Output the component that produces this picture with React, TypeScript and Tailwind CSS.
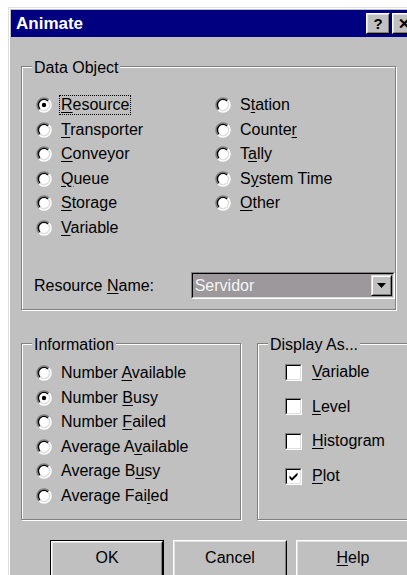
import React from 'react';

const FONT = { fontFamily: '"Liberation Sans", Arial, sans-serif' };

// underline the access-key letter of a label
const Label = ({ text, k }: { text: string; k: number }) => (
  <span>
    {text.slice(0, k)}
    <span className="underline underline-offset-2">{text[k]}</span>
    {text.slice(k + 1)}
  </span>
);

const arc = (r: number, first: boolean) => {
  const d = r * 0.7071;
  const a = [8 - d, 8 + d];
  const b = [8 + d, 8 - d];
  const [p, q] = first ? [a, b] : [b, a];
  return `M ${p[0]} ${p[1]} A ${r} ${r} 0 0 1 ${q[0]} ${q[1]}`;
};

const RadioMark = ({ checked }: { checked?: boolean }) => (
  <svg width="16" height="16" viewBox="0 0 16 16" className="shrink-0">
    <circle cx="8" cy="8" r="6" fill="#fff" />
    <path d={arc(7, true)} stroke="#808080" strokeWidth="1.6" fill="none" />
    <path d={arc(7, false)} stroke="#fff" strokeWidth="1.6" fill="none" />
    <path d={arc(5.6, true)} stroke="#000" strokeWidth="1.4" fill="none" />
    <path d={arc(5.6, false)} stroke="#dfdfdf" strokeWidth="1.4" fill="none" />
    {checked && <circle cx="8" cy="8" r="2.2" fill="#000" />}
  </svg>
);

const Radio = ({
  text,
  k,
  checked,
  focus,
}: {
  text: string;
  k: number;
  checked?: boolean;
  focus?: boolean;
}) => (
  <div className="flex h-[24.5px] items-center">
    <RadioMark checked={checked} />
    <span
      className={
        'ml-[8px] px-[1px] leading-[18px] ' + (focus ? 'outline outline-1 outline-dotted outline-black' : '')
      }
    >
      <Label text={text} k={k} />
    </span>
  </div>
);

const Check = ({ text, k, checked }: { text: string; k: number; checked?: boolean }) => (
  <div className="flex h-[34.6px] items-center">
    <div className="h-[17px] w-[17px] shrink-0 border border-b-white border-l-[#808080] border-r-white border-t-[#808080]">
      <div className="h-full w-full border border-b-[#dfdfdf] border-l-black border-r-[#dfdfdf] border-t-black bg-white">
        {checked && (
          <svg width="13" height="13" viewBox="0 0 13 13">
            <path d="M2.5 5.5 L5 8 L10.5 2.5 L10.5 5.2 L5 10.7 L2.5 8.2 Z" fill="#000" />
          </svg>
        )}
      </div>
    </div>
    <span className="ml-[10px] leading-[18px]">
      <Label text={text} k={k} />
    </span>
  </div>
);

// etched group frame with a caption sitting on the top line
const Group = ({
  title,
  className,
  children,
}: {
  title: string;
  className: string;
  children: React.ReactNode;
}) => (
  <div
    className={
      'relative border border-[#808080] shadow-[inset_1px_1px_0_#fff,1px_1px_0_#fff] ' + className
    }
  >
    <span className="absolute left-[10px] top-[-9px] bg-[#c0c0c0] px-[2px] leading-[20px]">{title}</span>
    {children}
  </div>
);

const Button = ({ children, isDefault }: { children: React.ReactNode; isDefault?: boolean }) => (
  <div className={'h-[40px] w-[114px] ' + (isDefault ? 'border border-black' : '')}>
    <div className="h-full w-full border border-b-black border-l-white border-r-black border-t-white">
      <div className="flex h-full w-full items-center justify-center border border-b-[#808080] border-l-[#dfdfdf] border-r-[#808080] border-t-[#dfdfdf] pb-[4px]">
        {children}
      </div>
    </div>
  </div>
);

const TitleButton = ({ children }: { children: React.ReactNode }) => (
  <div className="h-[21px] w-[24px] border border-b-black border-l-white border-r-black border-t-white bg-[#c0c0c0]">
    <div className="flex h-full w-full items-center justify-center border border-b-[#808080] border-l-[#dfdfdf] border-r-[#808080] border-t-[#dfdfdf] text-[15px] font-bold leading-none text-black">
      {children}
    </div>
  </div>
);

export default function App() {
  return (
    <div className="h-[575px] w-[407px] overflow-hidden bg-white pl-[8px] pt-[7px] text-[16px] text-black" style={FONT}>
      <div className="w-[420px] border border-b-black border-l-[#dfdfdf] border-r-black border-t-[#dfdfdf]">
        <div className="border border-b-[#808080] border-l-white border-r-[#808080] border-t-white bg-[#c0c0c0] p-[1px] pb-[40px]">
          {/* caption bar */}
          <div className="flex h-[27px] items-center bg-[#000080] pl-[5px] pr-[2px]">
            <span className="flex-1 text-[17px] font-bold text-white">Animate</span>
            <div className="flex gap-[2px] pr-[7px]">
              <TitleButton>?</TitleButton>
              <TitleButton>✕</TitleButton>
            </div>
          </div>

          <div className="pl-[10px]">
            <Group title="Data Object" className="mt-[29px] h-[244px] w-[375px]">
              <div className="flex pl-[14px] pt-[26px]">
                <div className="w-[179px]">
                  <Radio text="Resource" k={0} checked focus />
                  <Radio text="Transporter" k={0} />
                  <Radio text="Conveyor" k={0} />
                  <Radio text="Queue" k={0} />
                  <Radio text="Storage" k={0} />
                  <Radio text="Variable" k={0} />
                </div>
                <div>
                  <Radio text="Station" k={1} />
                  <Radio text="Counter" k={6} />
                  <Radio text="Tally" k={1} />
                  <Radio text="System Time" k={1} />
                  <Radio text="Other" k={0} />
                </div>
              </div>
              <div className="mt-[32px] flex items-center pl-[12px]">
                <span className="w-[158px]">
                  <Label text="Resource Name:" k={9} />
                </span>
                <div className="flex h-[27px] w-[206px] border border-b-white border-l-[#808080] border-r-white border-t-[#808080]">
                  <div className="flex flex-1 items-center border border-b-[#dfdfdf] border-l-black border-r-[#dfdfdf] border-t-black bg-[#9c989c] pr-[1px]">
                    <span className="flex-1 pl-[2px] text-[#f4f4f4]">Servidor</span>
                    <div className="h-[21px] w-[21px] border border-b-black border-l-[#dfdfdf] border-r-black border-t-[#dfdfdf] bg-[#c0c0c0]">
                      <div className="flex h-full w-full items-center justify-center border border-b-[#808080] border-l-white border-r-[#808080] border-t-white">
                        <svg width="9" height="5" viewBox="0 0 9 5">
                          <path d="M0 0 H9 L4.5 5 Z" fill="#000" />
                        </svg>
                      </div>
                    </div>
                  </div>
                </div>
              </div>
            </Group>

            <div className="mt-[33px] flex gap-[16px]">
              <Group title="Information" className="h-[177px] w-[220px]">
                <div className="pl-[14px] pt-[17px]">
                  <Radio text="Number Available" k={7} />
                  <Radio text="Number Busy" k={7} checked />
                  <Radio text="Number Failed" k={7} />
                  <Radio text="Average Available" k={9} />
                  <Radio text="Average Busy" k={9} />
                  <Radio text="Average Failed" k={11} />
                </div>
              </Group>
              <Group title="Display As..." className="h-[177px] w-[160px]">
                <div className="pl-[27px] pt-[11px]">
                  <Check text="Variable" k={0} />
                  <Check text="Level" k={0} />
                  <Check text="Histogram" k={0} />
                  <Check text="Plot" k={0} checked />
                </div>
              </Group>
            </div>

            <div className="mt-[20px] flex gap-[9px] pl-[29px]">
              <Button isDefault>OK</Button>
              <Button>Cancel</Button>
              <Button>
                <Label text="Help" k={0} />
              </Button>
            </div>
          </div>
        </div>
      </div>
    </div>
  );
}
